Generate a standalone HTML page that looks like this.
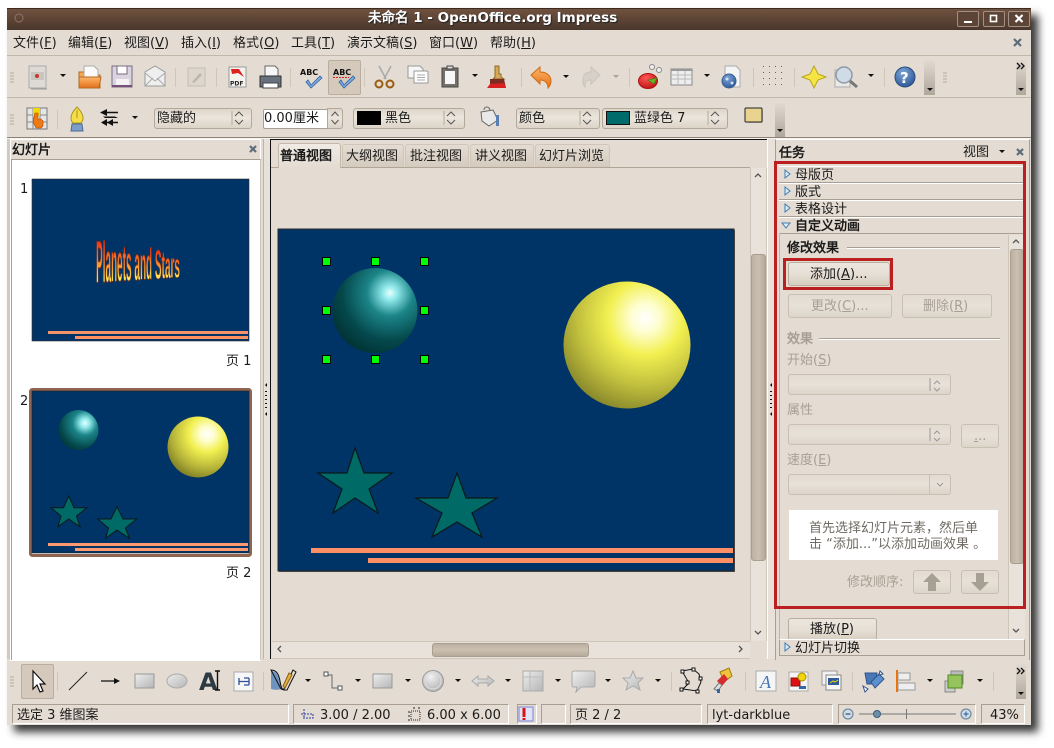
<!DOCTYPE html>
<html lang="zh"><head><meta charset="utf-8"><title>OpenOffice.org Impress</title>
<style>
html,body{margin:0;padding:0;background:#fff}
body{width:1054px;height:748px;overflow:hidden;position:relative;font:13px "WenQuanYi Zen Hei","DejaVu Sans",sans-serif;color:#1a1a1a}
div,span{position:absolute;box-sizing:border-box}
.t{white-space:nowrap;line-height:14px;height:14px}
.b{font-weight:bold}
.g{color:#a89f94}
u{text-decoration:underline}
.cb{border:1px solid #b3a99b;border-radius:3px;background:linear-gradient(#ded5ca,#ebe5dc 45%,#ddd4c8)}
.dis{border:1px solid #c9bfb2;border-radius:3px;background:linear-gradient(#e3dbd1,#e8e1d8 50%,#ddd5ca)}
.btn{border:1px solid #b8ae9f;border-radius:3px;background:linear-gradient(#ece6de,#e6dfd5 50%,#d7cdc0)}
.row{left:779px;width:246px;height:17px;background:#e4dcd2;border-top:1px solid #fff;border-bottom:1px solid #a89f92}
.st{top:704px;height:20px;border:1px solid #a89f92;border-right-color:#fff;border-bottom-color:#fff}
.tab{top:144px;height:23px;background:linear-gradient(#e4dcd2,#d5cbbf);border:1px solid #cfc6b9;border-bottom:0;border-radius:3px 3px 0 0}
.col{background:linear-gradient(#e2dad0,#b0a79c)}
</style></head><body>
<div style="left:7px;top:8px;width:1024px;height:717px;background:#e4dcd2;box-shadow:7px 7px 8px rgba(0,0,0,.78)"></div>
<div style="left:7px;top:8px;width:1024px;height:22px;background:linear-gradient(#70513f,#4a372c);border-top:1px solid #3a2a20"></div>
<div style="left:7px;top:55px;width:1024px;height:1px;background:#c2b8aa"></div>
<div style="left:7px;top:97px;width:1024px;height:1px;background:#c2b8aa"></div>
<div style="left:328px;top:60px;width:33px;height:35px;background:#d4c9bb;border:1px solid #b8ad9e;border-radius:2px"></div>
<div style="left:21px;top:664px;width:33px;height:35px;background:#d4c9bb;border:1px solid #b8ad9e;border-radius:2px"></div>
<div class="col" style="left:924px;top:60px;width:11px;height:35px"></div>
<div class="col" style="left:1016px;top:60px;width:10px;height:35px"></div>
<div class="col" style="left:775px;top:103px;width:10px;height:34px"></div>
<div class="col" style="left:1016px;top:664px;width:10px;height:35px"></div>

<div style="left:7px;top:137px;width:1024px;height:1px;background:#8d8477"></div>
<div style="left:7px;top:138px;width:1024px;height:1px;background:#f6f2ec"></div>
<div style="left:10px;top:139px;width:251px;height:522px;border:1px solid #fff;background:#e4dcd2"></div>
<div style="left:11px;top:159px;width:250px;height:501px;background:#fff;border:1px solid #a89f92;border-bottom:0;border-right-color:#cfc6b9"></div>
<div style="left:7px;top:139px;width:3px;height:520px;background:#d3cabd"></div>
<div style="left:263px;top:139px;width:7px;height:520px;background:#e8e1d9;border-left:1px solid #bfb5a7"></div>

<div style="left:270px;top:139px;width:497px;height:520px;background:#e4dcd2;border-left:1px solid #111;border-top:1px solid #111"></div>
<div class="tab" style="left:342px;width:62px"></div>
<div class="tab" style="left:405px;width:64px"></div>
<div class="tab" style="left:470px;width:64px"></div>
<div class="tab" style="left:535px;width:75px"></div>
<div style="left:271px;top:167px;width:479px;height:1px;background:#b0a596"></div>
<div class="tab" style="left:278px;top:143px;width:63px;height:25px;background:linear-gradient(#f0ebe4,#e4dcd2);border-color:#c2b7a8"></div>
<div style="left:750px;top:168px;width:17px;height:473px;background:#e8e2da;border-left:1px solid #cfc6b9;border-right:1px solid #cfc6b9"></div>
<div style="left:751px;top:254px;width:15px;height:307px;border:1px solid #a99e8f;border-radius:3px;background:linear-gradient(90deg,#bdb1a2,#cabfb1 50%,#b6aa9b)"></div>
<div style="left:272px;top:641px;width:478px;height:18px;background:#e8e2da;border-top:1px solid #cfc6b9;border-bottom:1px solid #cfc6b9"></div>
<div style="left:432px;top:643px;width:157px;height:14px;border:1px solid #a99e8f;border-radius:3px;background:linear-gradient(#bdb1a2,#cabfb1 50%,#b6aa9b)"></div>
<div style="left:767px;top:139px;width:8px;height:520px;background:#e8e1d9;border-left:1px solid #fff"></div>

<div style="left:775px;top:139px;width:255px;height:521px;background:#e4dcd2;border-left:1px solid #a89f92;border-top:1px solid #fff;border-right:1px solid #a89f92"></div>
<div class="row" style="top:166px"></div>
<div class="row" style="top:183px"></div>
<div class="row" style="top:200px"></div>
<div class="row" style="top:217px"></div>
<div style="left:779px;top:233px;width:1px;height:407px;background:#bfb5a7"></div>
<div style="left:1008px;top:235px;width:17px;height:405px;background:#e8e2da;border-left:1px solid #cfc6b9"></div>
<div style="left:1010px;top:249px;width:14px;height:315px;border:1px solid #a99e8f;border-radius:3px;background:linear-gradient(90deg,#bdb1a2,#cabfb1 50%,#b6aa9b)"></div>
<div style="left:847px;top:247px;width:153px;height:1px;background:#a89f92;box-shadow:0 1px #fff"></div>
<div style="left:819px;top:338px;width:181px;height:1px;background:#a89f92;box-shadow:0 1px #fff"></div>
<div class="btn" style="left:788px;top:262px;width:102px;height:24px"></div>
<div class="dis" style="left:788px;top:294px;width:104px;height:24px"></div>
<div class="dis" style="left:902px;top:294px;width:90px;height:24px"></div>
<div class="dis" style="left:788px;top:374px;width:163px;height:21px"></div>
<div class="dis" style="left:788px;top:424px;width:163px;height:21px"></div>
<div class="dis" style="left:961px;top:424px;width:38px;height:24px"></div>
<div class="dis" style="left:788px;top:474px;width:163px;height:21px"></div>
<div style="left:929px;top:474px;width:1px;height:21px;background:#c9bfb2"></div>
<div style="left:789px;top:510px;width:209px;height:50px;background:#fff"></div>
<div class="dis" style="left:913px;top:570px;width:38px;height:24px"></div>
<div class="dis" style="left:961px;top:570px;width:38px;height:24px"></div>
<div class="btn" style="left:788px;top:618px;width:89px;height:23px;border-bottom:0"></div>
<div class="row" style="top:639px;border:1px solid #a89f92;border-top-color:#fff"></div>
<div style="left:774px;top:161px;width:252px;height:448px;border:3px solid #ba2020"></div>
<div style="left:783px;top:258px;width:110px;height:32px;border:3px solid #ba2020"></div>

<div class="cb" style="left:154px;top:108px;width:98px;height:21px"></div>
<div style="left:263px;top:109px;width:65px;height:20px;background:#fff;border:1px solid #a89f92;border-radius:2px 0 0 2px"></div>
<div class="cb" style="left:327px;top:108px;width:16px;height:21px;border-radius:0 3px 3px 0"></div>
<div class="cb" style="left:353px;top:108px;width:112px;height:21px"></div>
<div class="cb" style="left:516px;top:108px;width:84px;height:21px"></div>
<div class="cb" style="left:602px;top:108px;width:126px;height:21px"></div>
<div style="left:357px;top:111px;width:24px;height:14px;background:#000"></div>
<div style="left:606px;top:111px;width:24px;height:14px;background:#006b6b;border:1px solid #111"></div>

<div class="st" style="left:12px;width:277px"></div>
<div class="st" style="left:293px;width:216px"></div>
<div class="st" style="left:517px;width:20px"></div>
<div class="st" style="left:541px;width:25px"></div>
<div class="st" style="left:570px;width:132px"></div>
<div class="st" style="left:707px;width:126px"></div>
<div class="st" style="left:838px;width:138px"></div>
<div class="st" style="left:981px;width:44px"></div>

<svg width="1054" height="748" viewBox="0 0 1054 748" style="position:absolute;left:0;top:0">
<defs>
<radialGradient id="tl" gradientUnits="userSpaceOnUse" cx="390" cy="293" r="72" fx="390" fy="293"><stop offset="0" stop-color="#e8ffff"/><stop offset=".1" stop-color="#8fe8ea"/><stop offset=".32" stop-color="#1c8588"/><stop offset=".66" stop-color="#04484c"/><stop offset="1" stop-color="#012c2c"/></radialGradient>
<radialGradient id="yl" gradientUnits="userSpaceOnUse" cx="645" cy="318" r="112"><stop offset="0" stop-color="#fff"/><stop offset=".13" stop-color="#fefed0"/><stop offset=".33" stop-color="#f2f050"/><stop offset=".6" stop-color="#c2c03e"/><stop offset=".85" stop-color="#8a8a2c"/><stop offset="1" stop-color="#6a6a20"/></radialGradient>
<radialGradient id="tl2" gradientUnits="userSpaceOnUse" cx="85" cy="423" r="34"><stop offset="0" stop-color="#e8ffff"/><stop offset=".14" stop-color="#8fe8ea"/><stop offset=".36" stop-color="#1c8588"/><stop offset=".72" stop-color="#04484c"/><stop offset="1" stop-color="#012c2c"/></radialGradient>
<radialGradient id="yl2" gradientUnits="userSpaceOnUse" cx="207" cy="434" r="50"><stop offset="0" stop-color="#fff"/><stop offset=".14" stop-color="#fefed0"/><stop offset=".36" stop-color="#f2f050"/><stop offset=".7" stop-color="#b4b238"/><stop offset="1" stop-color="#6f6e20"/></radialGradient>
<linearGradient id="fire" gradientUnits="userSpaceOnUse" x1="0" y1="-7.2" x2="0" y2="0"><stop offset="0" stop-color="#f02818"/><stop offset=".55" stop-color="#f89030"/><stop offset="1" stop-color="#fff060"/></linearGradient>
<linearGradient id="gr" x1="0" y1="0" x2="1" y2="1"><stop offset="0" stop-color="#eee"/><stop offset="1" stop-color="#b5b5b5"/></linearGradient>
<linearGradient id="or" x1="0" y1="0" x2="0" y2="1"><stop offset="0" stop-color="#fbb66a"/><stop offset="1" stop-color="#e5701a"/></linearGradient>
<radialGradient id="bl" cx=".4" cy=".3" r=".8"><stop offset="0" stop-color="#7fa6d6"/><stop offset="1" stop-color="#24508f"/></radialGradient>
<radialGradient id="rd" cx=".4" cy=".3" r=".8"><stop offset="0" stop-color="#f55"/><stop offset="1" stop-color="#b80f0f"/></radialGradient>
<radialGradient id="sm" cx=".4" cy=".3" r=".8"><stop offset="0" stop-color="#f2f2f2"/><stop offset="1" stop-color="#a9a9a9"/></radialGradient>
<symbol id="da" overflow="visible"><path d="M-3-2H3L0 1z" fill="#111"/></symbol>
<symbol id="spin" overflow="visible"><path d="M-7-7V7" stroke="#b3a99b" fill="none"/><path d="M-4-2L0-6L4-2M-4 2L0 6L4 2" stroke="#555" fill="none"/></symbol>
<symbol id="gs" overflow="visible"><path d="M-2-5H2M-2-2H2M-2 1H2M-2 4H2" stroke="#b5ab9c"/></symbol>
</defs>

<!-- title bar -->
<circle cx="19" cy="18" r="4" fill="none" stroke="#8d7566"/>
<g fill="#5c4436" stroke="#a29084"><rect x="957.500" y="11.500" width="21" height="15" rx="1.500"/><rect x="983.500" y="11.500" width="21" height="15" rx="1.500"/><rect x="1008.500" y="11.500" width="21" height="15" rx="1.500"/></g>
<path d="M964 21h8v2h-8z" fill="#fff"/><rect x="990.500" y="15.500" width="6" height="6" fill="none" stroke="#fff" stroke-width="1.600"/><path d="M1015.500 15l7 7m0-7l-7 7" stroke="#fff" stroke-width="2.200"/>
<path d="M1014 39l7 7m0-7l-7 7" stroke="#5d6c78" stroke-width="2.200"/>

<!-- toolbar 1 -->
<use href="#gs" x="12" y="78"/>
<path d="M29 66h17v22H29z" fill="#dedbd6" stroke="#aaa"/><path d="M31 72h13v8H31z" fill="#c9c5bf"/><circle cx="37" cy="76" r="2" fill="#c33"/><path d="M31 89h16" stroke="#999"/>
<use href="#da" x="63" y="76"/>
<path d="M79 72h8l2 3h11v13H79z" fill="#f6a64e" stroke="#b46a20"/><path d="M84 66h10l4 4v10H84z" fill="#fafafa" stroke="#aaa"/><path d="M79 77h22l-2 11H79z" fill="url(#or)" stroke="#b46a20"/>
<path d="M112 66h20v21h-20z" fill="#d9d4e0" stroke="#7b6a82"/><path d="M117 66h10v8h-10z" fill="#fff" stroke="#7b6a82"/><path d="M116 79h13v8h-13z" fill="#f4f2f4"/><path d="M112 85h20v2h-20z" fill="#75507b"/>
<path d="M145 72l10-6 10 6v14h-20z" fill="#efefef" stroke="#9a9a9a"/><path d="M145 73l10 8 10-8M145 86l8-8M165 86l-8-8" fill="none" stroke="#aaa"/>
<path d="M175.500 68v19" stroke="#cfc6b9"/>
<path d="M188 68h17v18h-17z" fill="#dcd6cd" stroke="#c7beb2"/><path d="M192 82l8-9 2 2-8 8z" fill="#bdb5aa"/>
<path d="M216.500 68v19" stroke="#cfc6b9"/>
<path d="M229 67h17v20h-17z" fill="#f5f3f0" stroke="#999"/><path d="M231 69h8l5 8-6-4-6 1z" fill="#d22"/><text x="230" y="85.500" style="font:bold 6px 'DejaVu Sans',sans-serif" fill="#222">PDF</text>
<path d="M265 66h10l3 3v7h-13z" fill="#f6f6f6" stroke="#666"/><path d="M260 76h21v11h-21z" fill="#67727e" stroke="#333"/><path d="M263 83h15v5h-15z" fill="#fff" stroke="#444"/>
<path d="M290.500 68v19" stroke="#cfc6b9"/>
<text x="300" y="75" style="font:bold 8px 'DejaVu Sans',sans-serif" fill="#111">ABC</text><path d="M308 80l3 5 9-9 2 2-11 10-5-6z" fill="#7fa9d9" stroke="#3465a4" stroke-width=".8"/>
<text x="333" y="75" style="font:bold 8px 'DejaVu Sans',sans-serif" fill="#111">ABC</text><path d="M333 77.500h16" stroke="#d22" stroke-dasharray="2 1"/><path d="M341 80l3 5 9-9 2 2-11 10-5-6z" fill="#7fa9d9" stroke="#3465a4" stroke-width=".8"/>
<path d="M364.500 68v19" stroke="#cfc6b9"/>
<path d="M379 66l7 13m5-13l-7 13" stroke="#aaa" stroke-width="1.600" fill="none"/><circle cx="379" cy="84" r="3.500" fill="none" stroke="#9a5d10" stroke-width="2"/><circle cx="390" cy="84" r="3.500" fill="none" stroke="#9a5d10" stroke-width="2"/>
<path d="M408 66h12l3 3v9h-15z" fill="#f6f6f6" stroke="#999"/><path d="M414 71h13l1 1v11h-14z" fill="#fff" stroke="#999"/><path d="M417 75h8m-8 2.500h8m-8 2.500h8" stroke="#aaa"/>
<path d="M442 68h16v19h-16z" fill="#75706a" stroke="#444"/><path d="M447 66h6v3h-6z" fill="#ddd" stroke="#444"/><path d="M445 71h10v13h-10z" fill="#f7f7f7"/>
<use href="#da" x="475" y="76"/>
<path d="M495 66h4v8h2v3l3 2h-11l2-2v-3z" fill="#d4a95a" stroke="#8f6a20"/><path d="M490 79h14l2 9h-16z" fill="#7a2b22"/><path d="M490 84l-3 4h19l-2-5z" fill="#d82020"/>
<path d="M521.500 68v19" stroke="#cfc6b9"/>
<path d="M531 75l9-8v5c7 0 11 4 11 9 0 3-1 5-3 7 0-5-3-8-8-8v4z" fill="url(#or)" stroke="#d36a10"/>
<use href="#da" x="566" y="77"/>
<path d="M600 75l-9-8v5c-7 0-8 4-8 9 0 3 0 4 2 6 0-5 1-7 6-7v4z" fill="#d6d0c8" stroke="#cbc4ba"/>
<path d="M613 75h6l-3 3z" fill="#a9a196"/>
<path d="M629.500 68v19" stroke="#cfc6b9"/>
<ellipse cx="648" cy="81" rx="9.500" ry="7.500" fill="url(#rd)" stroke="#a11"/><path d="M648 80l9-2-3 6z" fill="#62b325" stroke="#3e7f12" stroke-width=".6"/>
<circle cx="652" cy="67" r="2.500" fill="#eee" stroke="#888"/><circle cx="659" cy="70" r="2.500" fill="#eee" stroke="#888"/>
<path d="M671 69h21v16h-21z" fill="#eee" stroke="#888"/><path d="M671 69h21v2h-21z" fill="#999"/><path d="M671 75h21M671 79h21M678 71v14M685 71v14" stroke="#bbb"/>
<use href="#da" x="707" y="76"/>
<path d="M725 66h11l4 4v17h-15z" fill="#f4f4f4" stroke="#aaa"/><circle cx="729" cy="81" r="7" fill="url(#bl)" stroke="#355f95"/><circle cx="727" cy="79" r="1.500" fill="#cfe0f4"/><circle cx="732" cy="83" r="1.500" fill="#cfe0f4"/>
<path d="M753.500 68v19" stroke="#cfc6b9"/>
<g fill="#6a6358"><path d="M763 66h1v1h-1zM769 66h1v1h-1zM775 66h1v1h-1zM781 66h1v1h-1zM763 72h1v1h-1zM769 72h1v1h-1zM775 72h1v1h-1zM781 72h1v1h-1zM763 78h1v1h-1zM769 78h1v1h-1zM775 78h1v1h-1zM781 78h1v1h-1zM763 84h1v1h-1zM769 84h1v1h-1zM775 84h1v1h-1zM781 84h1v1h-1z"/></g>
<path d="M794.500 68v19" stroke="#cfc6b9"/>
<path d="M814 66l4 8 8 3-8 3-4 8-4-8-8-3 8-3z" fill="#f4e444" stroke="#b8a520"/>
<path d="M835 70h15v17h-15z" fill="#eceae7" stroke="#aaa"/><circle cx="844" cy="75" r="8" fill="#cfdbe6" stroke="#8f9aa4" stroke-width="1.500"/><path d="M850 81l7 6" stroke="#777" stroke-width="3"/>
<use href="#da" x="871" y="76"/>
<path d="M884.500 68v19" stroke="#cfc6b9"/>
<circle cx="905" cy="77" r="10" fill="url(#bl)" stroke="#274b80"/><text x="900" y="83" style="font:bold 15px 'DejaVu Sans',sans-serif" fill="#fff">?</text>
<use href="#da" x="930" y="90"/><use href="#gs" x="945" y="78"/><use href="#da" x="1021" y="90"/>
<path d="M1017 63l3 3-3 3M1021 63l3 3-3 3" fill="none" stroke="#111" stroke-width="1.300"/>

<!-- toolbar 2 -->
<use href="#gs" x="12" y="120"/>
<path d="M27 108h20v21H27z" fill="#e6e6e6" stroke="#777"/><path d="M27 115h20M27 122h20M33 108v21M40 108v21" stroke="#888"/><path d="M33 108h7v8h-7z" fill="#f5d800"/><path d="M35 113h3v6h3l2 2v5l-2 2h-5l-3-6z" fill="#ee7a14" stroke="#a84d08" stroke-width=".6"/>
<path d="M57.500 110v19" stroke="#cfc6b9"/>
<path d="M77 107c3 3 6 7 6 11 0 2-1 4-2 5h-8c-1-1-2-3-2-5 0-4 3-8 6-11z" fill="#f5de48" stroke="#a89420"/><path d="M77 110v8" stroke="#a89420"/><path d="M72 124h10l1 7H71z" fill="#7f9ec7" stroke="#4a6a95"/>
<path d="M103 112.500h15M102 122.500h16" stroke="#111" stroke-width="1.400" fill="none"/><path d="M100 112.500l7-3.500v7zM101 122.500l6-3.500v7zM107 122.500l6-3.500v7zM103 116.500h12l3 1.500h-13z" fill="#111"/>
<use href="#da" x="135" y="118"/>
<use href="#spin" x="239" y="118"/><path d="M331-0" fill="none"/><path d="M331.500 116l3.500-4 3.500 4M331.500 120l3.500 4 3.500-4" stroke="#555" fill="none"/><use href="#spin" x="451" y="118"/>
<path d="M481 112l12-2 5 10-9 6-7-5z" fill="#e9e9e9" stroke="#666"/><path d="M484 110c0-4 5-4 6 0" fill="none" stroke="#666"/><path d="M496 115h3v11h-3z" fill="#5a7fb3"/>
<use href="#spin" x="587" y="118"/><use href="#spin" x="715" y="118"/>
<rect x="747" y="110" width="16" height="13" rx="2" fill="#a89c8c" opacity=".6"/><rect x="745" y="108" width="17" height="14" rx="1" fill="#e8d48e" stroke="#222"/>
<use href="#da" x="780" y="131"/>

<!-- panel closes -->
<path d="M250 146l6 6m0-6l-6 6" stroke="#5d6c78" stroke-width="2.200"/>
<path d="M1017 149l6 6m0-6l-6 6" stroke="#5d6c78" stroke-width="2.200"/>
<use href="#da" x="1002" y="152"/>

<!-- slide 1 thumb -->
<rect x="32" y="179" width="217" height="162" fill="#003366" stroke="#333" stroke-width=".6"/>
<rect x="48" y="331" width="200" height="3" fill="#f4926a"/><rect x="75" y="336" width="173" height="3" fill="#ff9060"/>
<g style="font:bold 10px 'Liberation Sans',sans-serif" fill="url(#fire)" stroke="#8a3010" stroke-width=".22">
<text transform="translate(96,282.500) scale(1,5.97)">P</text><text transform="translate(102.700,282) scale(1,5.75)">l</text><text transform="translate(105.500,281.900) scale(1,5.67)">a</text><text transform="translate(111,281.500) scale(1,5.5)">n</text><text transform="translate(117,281) scale(1,5.3)">e</text><text transform="translate(122.700,280.700) scale(1,5.1)">t</text><text transform="translate(126,280.500) scale(1,5)">s</text><text transform="translate(134.400,280) scale(1,4.74)">a</text><text transform="translate(140,279.600) scale(1,4.55)">n</text><text transform="translate(146,279.200) scale(1,4.36)">d</text><text transform="translate(154.900,278.600) scale(1,4.07)">S</text><text transform="translate(161.600,278.200) scale(1,3.86)">t</text><text transform="translate(165,278) scale(1,3.75)">a</text><text transform="translate(170.500,277.600) scale(1,3.57)">r</text><text transform="translate(174.400,277.300) scale(1,3.44)">s</text>
</g>

<!-- slide 2 thumb -->
<rect x="30.500" y="389.500" width="220" height="166" rx="2" fill="none" stroke="#8f6552" stroke-width="3"/>
<rect x="32" y="391" width="217" height="162" fill="#003366" stroke="#222" stroke-width=".6"/>
<circle cx="78.500" cy="430" r="20" fill="url(#tl2)"/><circle cx="198" cy="447" r="30.500" fill="url(#yl2)"/>
<path d="M68.700 496L74 507.700H86.700L76.500 516L80 526.700L68.700 519L58 526.700L61 516L51 507.700H63.500Z" fill="#006b66" stroke="#0a1a1a"/>
<path d="M117 506.700L123 519H136.700L125.500 528L129.300 538.300L117 530L105.700 538.300L108.500 528L97.700 519H111Z" fill="#006b66" stroke="#0a1a1a"/>
<rect x="48" y="543" width="200" height="3" fill="#ff9a70"/><rect x="75" y="548" width="173" height="3" fill="#ff9a70"/>

<!-- main slide -->
<rect x="279" y="230" width="456" height="342" fill="#5e5a52"/>
<rect x="278" y="229" width="456" height="342" fill="#003366" stroke="#2a2a2a"/>
<circle cx="375" cy="310.500" r="42.500" fill="url(#tl)"/>
<circle cx="627" cy="345" r="63.500" fill="url(#yl)"/>
<path d="M355 448L364 473H392L369 489L378 513L355 498L333 513L342 489L318 473H347Z" fill="#006b66" stroke="#0a1a1a" stroke-width="1.200"/>
<path d="M457 473L466 498H497L472 513L482 537L457 522L432 537L442 513L416 498H448Z" fill="#006b66" stroke="#0a1a1a" stroke-width="1.200"/>
<rect x="311" y="548" width="422" height="5" fill="#ff9066"/><rect x="368" y="558" width="365" height="5" fill="#ff9066"/>
<g fill="#0f0" stroke="#000"><rect x="322.500" y="257.500" width="8" height="8"/><rect x="371.500" y="257.500" width="8" height="8"/><rect x="420.500" y="257.500" width="8" height="8"/><rect x="322.500" y="306.500" width="8" height="8"/><rect x="420.500" y="306.500" width="8" height="8"/><rect x="322.500" y="355.500" width="8" height="8"/><rect x="371.500" y="355.500" width="8" height="8"/><rect x="420.500" y="355.500" width="8" height="8"/></g>

<!-- scroll arrows -->
<g fill="none" stroke="#555" stroke-width="1.300"><path d="M755 177l3-3 3 3M755 631l3 3 3-3M281 646l-3 3 3 3M739 646l3 3-3 3M1013 243l3-3 3 3M1013 629l3 3 3-3"/></g>
<!-- splitters -->
<g fill="#111"><path d="M267 383v4l-2-2zM267 412v4l-2-2zM772 383v4l-2-2zM772 412v4l-2-2z"/><path d="M265 391h2v1h-2zM265 395h2v1h-2zM265 399h2v1h-2zM265 403h2v1h-2zM265 407h2v1h-2zM770 391h2v1h-2zM770 395h2v1h-2zM770 399h2v1h-2zM770 403h2v1h-2zM770 407h2v1h-2z"/></g>

<!-- task triangles -->
<g fill="#dcebf7" stroke="#3f7db5"><path d="M785 170v8l5-4zM785 187v8l5-4zM785 204v8l5-4zM785 643v8l5-4z"/><path d="M782 223h8l-4 5z"/></g>
<g fill="none" stroke="#999"><path d="M930 378v13M934 384l3-3 3 3M934 388l3 3 3-3M930 428v13M934 434l3-3 3 3M934 438l3 3 3-3M937 483l3 3 3-3"/></g>
<path d="M932 572l9 9h-5v9h-8v-9h-5z" fill="#a89f94" transform="translate(0 1)"/>
<path d="M980 591l9-9h-5v-9h-8v9h-5z" fill="#a89f94"/>

<!-- bottom toolbar -->
<use href="#gs" x="12" y="682"/>
<path d="M33 671v18l4-4 3 7 3-1-3-7h5z" fill="#fff" stroke="#111" stroke-width="1.200"/>
<path d="M57.500 672v19" stroke="#cfc6b9"/>
<path d="M69 690l18-18" stroke="#222"/><path d="M101 681h17" stroke="#111" stroke-width="1.300"/><path d="M114 678l6 3-6 3z" fill="#111"/>
<rect x="135" y="674" width="19" height="14" fill="url(#gr)" stroke="#999"/><ellipse cx="177" cy="681" rx="10" ry="7" fill="url(#gr)" stroke="#aaa"/>
<text x="199" y="690" style="font:bold 24px 'DejaVu Sans',sans-serif" fill="#2d3a42">A</text><path d="M215 671h5m-2.500 0v19m-2.500 0h5" stroke="#111" stroke-width="1.400" fill="none"/>
<rect x="234" y="672" width="19" height="19" fill="#f7f7f7" stroke="#aaa"/><path d="M239 678v7m10-7v7M239 681.500h10M244 678h5M244 685h5" stroke="#2b4f9b" stroke-width="1.300" fill="none"/>
<path d="M263.500 672v19" stroke="#cfc6b9"/>
<path d="M271 671c5 0 8 4 9 10l1 8c-3 1-6 1-10 0z" fill="#6f93bf"/><path d="M271 670c6 0 8 5 9 11s2 9 4 8l9-19 3 2-9 18-3 0-3-1z" fill="none" stroke="#111"/><path d="M289 673l3 2-7 13-2-2z" fill="#e3b040" stroke="#8a5e12"/>
<use href="#da" x="308" y="681"/>
<path d="M327 675h5v13h7" fill="none" stroke="#666"/><rect x="324" y="672" width="4" height="4" fill="#fff" stroke="#555"/><rect x="338" y="686" width="4" height="4" fill="#fff" stroke="#555"/>
<use href="#da" x="358" y="681"/>
<rect x="373" y="674" width="19" height="14" fill="url(#gr)" stroke="#999"/><use href="#da" x="408" y="681"/>
<circle cx="433" cy="681" r="10.500" fill="url(#sm)" stroke="#999"/><circle cx="433" cy="681" r="8" fill="none" stroke="#ddd"/>
<use href="#da" x="458" y="681"/>
<path d="M472 681l6-5v3h10v-3l6 5-6 5v-3h-10v3z" fill="url(#gr)" stroke="#aaa"/><use href="#da" x="508" y="681"/>
<rect x="523" y="671" width="20" height="20" fill="url(#gr)" stroke="#aaa"/><path d="M530 671v20M523 677h20" stroke="#bbb"/><use href="#da" x="558" y="681"/>
<path d="M574 671h19q2 0 2 2v12q0 2-2 2h-12l-5 5 1-5h-3q-2 0-2-2v-12q0-2 2-2z" fill="url(#gr)" stroke="#aaa"/><use href="#da" x="608" y="681"/>
<path d="M633 671l3 7h7l-5 5 2 7-7-4-7 4 2-7-5-5h7z" fill="url(#gr)" stroke="#aaa"/><use href="#da" x="658" y="681"/>
<path d="M671.500 672v19" stroke="#cfc6b9"/>
<path d="M682 671l11-2 6 5 2 8-4 9-14-2 6-6z" fill="none" stroke="#111"/><g fill="#fff" stroke="#111"><rect x="681" y="670" width="3" height="3"/><rect x="692" y="668" width="3" height="3"/><rect x="699" y="677" width="3" height="3"/><rect x="696" y="690" width="3" height="3"/><rect x="680" y="688" width="3" height="3"/><rect x="686" y="681" width="3" height="3"/></g>
<path d="M720 672l9-4 3 8-8 6z" fill="#eec43c" stroke="#a07a10"/><path d="M717 681l7-7 4 5-6 7z" fill="#d62c2c"/><path d="M714 689l5-6 3 2-4 6z" fill="#ddd" stroke="#777"/><rect x="717" y="689" width="3" height="4" fill="#3465a4"/>
<path d="M745.500 672v19" stroke="#cfc6b9"/>
<rect x="756" y="671" width="20" height="20" fill="#f5f5f5" stroke="#aaa"/><text x="760" y="688" style="font:italic 18px 'Liberation Serif',serif" fill="#4a78b5">A</text>
<rect x="789" y="672" width="19" height="19" fill="#f5f5f5" stroke="#aaa"/><rect x="791" y="678" width="9" height="8" fill="#d11" stroke="#811"/><circle cx="802" cy="677" r="4" fill="#f2d40f" stroke="#a88e00"/><path d="M799 686h7v3h-7z" fill="#3465a4"/>
<rect x="822" y="671" width="15" height="14" fill="#f2f2f2" stroke="#999"/><rect x="826" y="675" width="15" height="15" fill="#f7f7f7" stroke="#888"/><rect x="828" y="678" width="11" height="7" fill="#2e5a97"/><path d="M830 683l3-2 2 1 3-2" stroke="#f2d40f" fill="none"/>
<path d="M852.500 672v19" stroke="#cfc6b9"/>
<path d="M865 673h12l-2 11h-8z" fill="#4a78b5" stroke="#2f558d"/><path d="M871 682l8-8 5 5-9 9z" fill="#5c8fd0" stroke="#2f558d"/><path d="M863 686l5 3-3 3zM880 671l3 3-4 1z" fill="#fff" stroke="#2f558d"/>
<rect x="896" y="670" width="2" height="22" fill="#e5720f"/><rect x="898" y="673" width="12" height="7" fill="#eee" stroke="#999"/><rect x="898" y="683" width="17" height="7" fill="#eee" stroke="#999"/><use href="#da" x="930" y="681"/>
<rect x="951" y="671" width="12" height="13" fill="#bbb" stroke="#888"/><rect x="945" y="681" width="10" height="11" fill="#ccc" stroke="#888"/><rect x="948" y="675" width="14" height="13" fill="#94c45b" stroke="#4e8b1c"/><use href="#da" x="980" y="681"/>
<path d="M993.500 672v19" stroke="#cfc6b9"/>
<use href="#da" x="1021" y="694"/><path d="M1017 668l3 3-3 3M1021 668l3 3-3 3" fill="none" stroke="#111" stroke-width="1.300"/>

<!-- statusbar icons -->
<path d="M301 714h12v4h-10M304 709v8" stroke="#2340a0" fill="none" stroke-dasharray="2 1"/>
<rect x="411" y="711" width="9" height="9" fill="none" stroke="#222" stroke-dasharray="1 1"/><path d="M408 712h2M408 716h2M408 720h2M413 708h2M418 708h2" stroke="#222"/>
<rect x="519" y="707" width="14" height="14" fill="#dfe3f7" stroke="#7a85d5"/><path d="M524 708v9" stroke="#d11" stroke-width="3"/><rect x="522.500" y="718" width="3" height="2" fill="#d11"/>
<circle cx="848" cy="714" r="5" fill="#cfdbe6" stroke="#5c7d99"/><path d="M845.500 714h5" stroke="#234"/>
<path d="M859 714h97" stroke="#8a8a8a" stroke-width="1.300"/><path d="M906.500 709v10" stroke="#777"/><circle cx="877" cy="714" r="3.500" fill="#6c8ea8" stroke="#3f5e78"/>
<circle cx="966" cy="714" r="5" fill="#cfdbe6" stroke="#5c7d99"/><path d="M963.500 714h5M966 711.500v5" stroke="#1f5fa0"/>
</svg>

<div class="t b" style="left:368px;top:11px;color:#fff;font:bold 13.500px 'DejaVu Sans','WenQuanYi Zen Hei',sans-serif;line-height:14px;text-shadow:1px 1px 1px #222">未命名 1 - OpenOffice.org Impress</div>

<span class="t" style="left:13px;top:37px">文件(<u>F</u>)</span>
<span class="t" style="left:68px;top:37px">编辑(<u>E</u>)</span>
<span class="t" style="left:124px;top:37px">视图(<u>V</u>)</span>
<span class="t" style="left:181px;top:37px">插入(<u>I</u>)</span>
<span class="t" style="left:233px;top:37px">格式(<u>O</u>)</span>
<span class="t" style="left:291px;top:37px">工具(<u>T</u>)</span>
<span class="t" style="left:347px;top:37px">演示文稿(<u>S</u>)</span>
<span class="t" style="left:429px;top:37px">窗口(<u>W</u>)</span>
<span class="t" style="left:490px;top:37px">帮助(<u>H</u>)</span>

<span class="t" style="left:157px;top:112px">隐藏的</span>
<span class="t" style="left:264px;top:112px">0.00厘米</span>
<span class="t" style="left:385px;top:112px">黑色</span>
<span class="t" style="left:519px;top:112px">颜色</span>
<span class="t" style="left:634px;top:112px">蓝绿色 7</span>

<span class="t b" style="left:12px;top:144px">幻灯片</span>
<span class="t" style="left:20px;top:183px">1</span>
<span class="t" style="left:226px;top:355px">页 1</span>
<span class="t" style="left:20px;top:395px">2</span>
<span class="t" style="left:226px;top:567px">页 2</span>

<span class="t b" style="left:280px;top:150px">普通视图</span>
<span class="t" style="left:346px;top:150px">大纲视图</span>
<span class="t" style="left:410px;top:150px">批注视图</span>
<span class="t" style="left:475px;top:150px">讲义视图</span>
<span class="t" style="left:539px;top:150px">幻灯片浏览</span>

<span class="t b" style="left:779px;top:147px">任务</span>
<span class="t" style="left:963px;top:146px">视图</span>
<span class="t" style="left:795px;top:169px">母版页</span>
<span class="t" style="left:795px;top:186px">版式</span>
<span class="t" style="left:795px;top:203px">表格设计</span>
<span class="t b" style="left:795px;top:220px">自定义动画</span>
<span class="t b" style="left:787px;top:242px">修改效果</span>
<span class="t" style="left:810px;top:268px">添加(<u>A</u>)...</span>
<span class="t g" style="left:811px;top:300px">更改(<u>C</u>)...</span>
<span class="t g" style="left:923px;top:300px">删除(<u>R</u>)</span>
<span class="t g b" style="left:787px;top:333px">效果</span>
<span class="t g" style="left:787px;top:354px">开始(<u>S</u>)</span>
<span class="t g" style="left:787px;top:404px">属性</span>
<span class="t g" style="left:974px;top:430px"><u>.</u>..</span>
<span class="t g" style="left:787px;top:454px">速度(<u>E</u>)</span>
<span class="t" style="left:809px;top:522px;color:#6f6a63">首先选择幻灯片元素，然后单</span>
<span class="t" style="left:809px;top:538px;color:#6f6a63">击 “添加...”以添加动画效果 。</span>
<span class="t g" style="left:847px;top:576px">修改顺序:</span>
<span class="t" style="left:810px;top:623px">播放(<u>P</u>)</span>
<span class="t" style="left:795px;top:642px">幻灯片切换</span>

<span class="t" style="left:17px;top:709px">选定 3 维图案</span>
<span class="t" style="left:320px;top:709px">3.00 / 2.00</span>
<span class="t" style="left:427px;top:709px">6.00 x 6.00</span>
<span class="t" style="left:575px;top:709px">页 2 / 2</span>
<span class="t" style="left:712px;top:709px">lyt-darkblue</span>
<span class="t" style="left:990px;top:709px">43%</span>
</body></html>
